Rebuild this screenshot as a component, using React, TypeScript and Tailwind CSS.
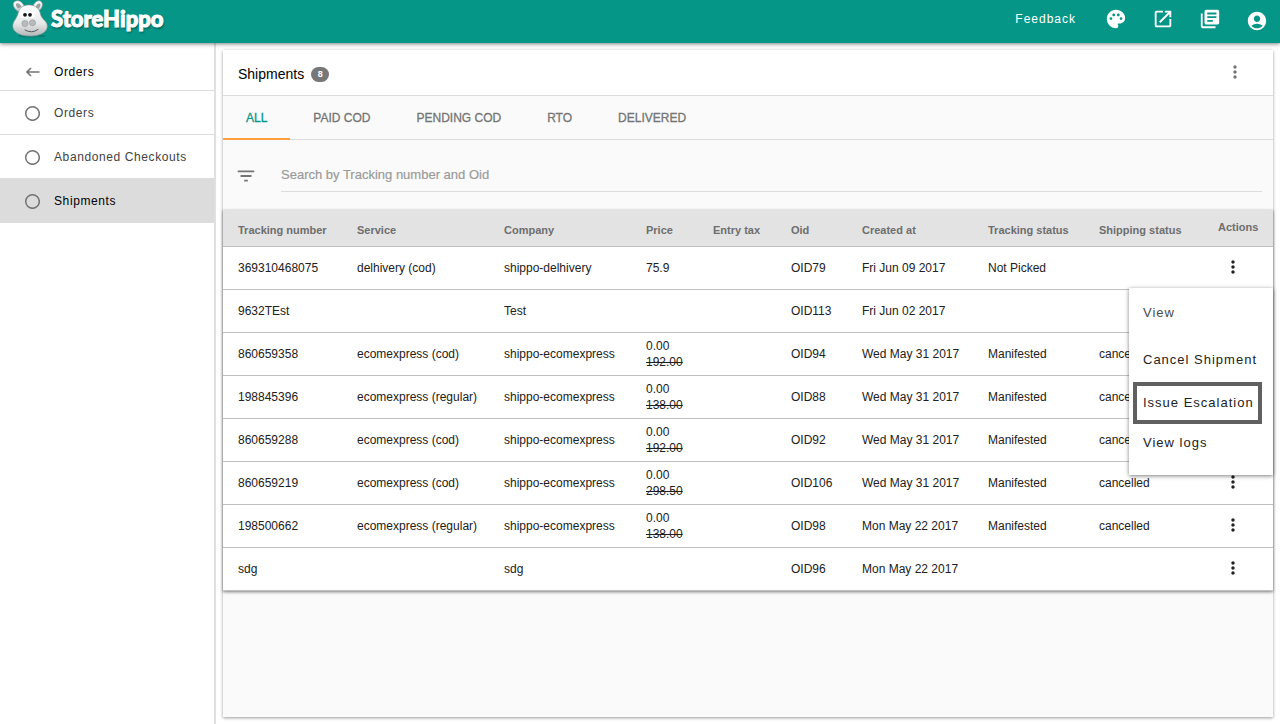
import React, { useState } from 'react';
import { MdPalette, MdOpenInNew, MdLibraryBooks, MdAccountCircle, MdMoreVert, MdFilterList } from 'react-icons/md';

const tabs = ['ALL', 'PAID COD', 'PENDING COD', 'RTO', 'DELIVERED'];

const navItems = ['Orders', 'Abandoned Checkouts', 'Shipments'];

const columns = [
    { label: 'Tracking number', width: 'w-[119px]' },
    { label: 'Service', width: 'w-[147px]' },
    { label: 'Company', width: 'w-[142px]' },
    { label: 'Price', width: 'w-[67px]' },
    { label: 'Entry tax', width: 'w-[78px]' },
    { label: 'Oid', width: 'w-[71px]' },
    { label: 'Created at', width: 'w-[126px]' },
    { label: 'Tracking status', width: 'w-[111px]' },
    { label: 'Shipping status', width: 'w-[119px]' },
];

interface Shipment {
    tracking: string;
    service?: string;
    company: string;
    price?: string;
    oldPrice?: string;
    oid: string;
    created: string;
    trackingStatus?: string;
    shippingStatus?: string;
}

const shipments: Shipment[] = [
    { tracking: '369310468075', service: 'delhivery (cod)', company: 'shippo-delhivery', price: '75.9', oid: 'OID79', created: 'Fri Jun 09 2017', trackingStatus: 'Not Picked' },
    { tracking: '9632TEst', company: 'Test', oid: 'OID113', created: 'Fri Jun 02 2017' },
    { tracking: '860659358', service: 'ecomexpress (cod)', company: 'shippo-ecomexpress', price: '0.00', oldPrice: '192.00', oid: 'OID94', created: 'Wed May 31 2017', trackingStatus: 'Manifested', shippingStatus: 'cancelled' },
    { tracking: '198845396', service: 'ecomexpress (regular)', company: 'shippo-ecomexpress', price: '0.00', oldPrice: '138.00', oid: 'OID88', created: 'Wed May 31 2017', trackingStatus: 'Manifested', shippingStatus: 'cancelled' },
    { tracking: '860659288', service: 'ecomexpress (cod)', company: 'shippo-ecomexpress', price: '0.00', oldPrice: '192.00', oid: 'OID92', created: 'Wed May 31 2017', trackingStatus: 'Manifested', shippingStatus: 'cancelled' },
    { tracking: '860659219', service: 'ecomexpress (cod)', company: 'shippo-ecomexpress', price: '0.00', oldPrice: '298.50', oid: 'OID106', created: 'Wed May 31 2017', trackingStatus: 'Manifested', shippingStatus: 'cancelled' },
    { tracking: '198500662', service: 'ecomexpress (regular)', company: 'shippo-ecomexpress', price: '0.00', oldPrice: '138.00', oid: 'OID98', created: 'Mon May 22 2017', trackingStatus: 'Manifested', shippingStatus: 'cancelled' },
    { tracking: 'sdg', company: 'sdg', oid: 'OID96', created: 'Mon May 22 2017' },
];

const HippoLogo = () => (
    <svg viewBox="0 0 37 38" className="w-[37px] h-[38px]" aria-hidden="true">
        <defs>
            <linearGradient id="skin" x1="0" y1="0" x2="0" y2="1">
                <stop offset="0" stopColor="#ffffff" />
                <stop offset="0.6" stopColor="#e6e7e7" />
                <stop offset="1" stopColor="#b4b8b8" />
            </linearGradient>
        </defs>
        <ellipse cx="20" cy="36" rx="14" ry="1.6" fill="#04665d" opacity="0.5" />
        <path d="M7 12 C0 8 0 2 4 1 C8 0 11 3 12.5 7 Z" fill="url(#skin)" stroke="#8d9999" strokeWidth="0.6" />
        <path d="M21 6.500 C22 2 27 -1 29.500 2 C32 5 29 10 26 11 Z" fill="url(#skin)" stroke="#8d9999" strokeWidth="0.6" />
        <path d="M6 8.500 C3.500 6 3.500 3.700 5 3.300 C7 3 8.800 5 9.500 7 Z" fill="#9a9f9f" />
        <path d="M23.800 7 C24.500 4.500 27 2.800 28.200 4 C29 5.500 27.500 8 25.800 9 Z" fill="#9a9f9f" />
        <path d="M6.500 12 C8 7 12 5 17 5 C22 5 26.500 7.500 28 12.500 C28.700 16 30 18 33 21 C38.500 27 34 35.800 19 36 C4 36.200 -2 29 2 21.500 C4.500 17.500 5.500 16 6.500 12 Z" fill="url(#skin)" stroke="#909b9b" strokeWidth="0.7" />
        <ellipse cx="12.200" cy="14.500" rx="4" ry="3.600" fill="#fff" />
        <ellipse cx="19.200" cy="14.500" rx="4" ry="3.600" fill="#fff" />
        <circle cx="13" cy="14.800" r="1.900" fill="#151515" />
        <circle cx="18" cy="14.800" r="1.900" fill="#151515" />
        <circle cx="13" cy="23.500" r="3.100" fill="#b8bbbb" stroke="#979c9c" strokeWidth="0.6" />
        <circle cx="20.500" cy="22.800" r="3.100" fill="#b8bbbb" stroke="#979c9c" strokeWidth="0.6" />
        <path d="M13 30 Q19.500 34 26 29.500" fill="none" stroke="#555b5b" strokeWidth="1" strokeLinecap="round" />
    </svg>
);

const ArrowLeft = () => (
    <svg viewBox="0 0 14 10" className="w-3.5 h-2.5 text-[#757575]" fill="none" stroke="currentColor" strokeWidth="1.6" aria-hidden="true">
        <path d="M13.500 5 H1.200 M5 1 L1 5 L5 9" />
    </svg>
);

const CircleIcon = () => (
    <svg viewBox="0 0 16 16" className="w-4 h-4 shrink-0 text-[#737373]" fill="none" stroke="currentColor" strokeWidth="1.500" aria-hidden="true">
        <circle cx="8.500" cy="8.500" r="6.800" />
    </svg>
);

const ActionMenu = () => (
    <div className="absolute top-full right-0 z-10 flex flex-col items-start w-36 pb-[13px] bg-white text-[13px] tracking-[1px] text-[#222] shadow-[0_1px_4px_rgba(0,0,0,0.5)]">
        <button className="h-[50px] px-3.5 text-[#4a4a4a]">View</button>
        <button className="h-11 px-3.5 whitespace-nowrap">Cancel Shipment</button>
        <button className="h-[42px] mx-1 pl-1.5 pr-1 border-4 border-[#606060] whitespace-nowrap">Issue Escalation</button>
        <button className="h-[38px] px-3.5">View logs</button>
    </div>
);

const App = () => {
    const [activeTab, setActiveTab] = useState('ALL');
    const [openRow, setOpenRow] = useState<number | null>(0);
    const [query, setQuery] = useState('');

    return (
        <div className="min-h-screen flex flex-col bg-white font-['Liberation_Sans',Arial,sans-serif] text-xs text-[#212121]">
            <header className="relative z-10 h-[43px] flex items-center justify-between px-3 bg-[#059688] text-white shadow-[0_1px_4px_rgba(0,0,0,0.5)]">
                <a href="#" className="flex items-center gap-0.5 pb-1.5" aria-label="StoreHippo">
                    <HippoLogo />
                    <span className="font-['Lato',sans-serif] font-black text-[22px] leading-6 [-webkit-text-stroke:1px_white] [text-shadow:1px_2px_2px_rgba(0,0,0,0.35)]">StoreHippo</span>
                </a>
                <nav className="flex items-center gap-[25px] pb-1.5">
                    <a href="#" className="mr-1 tracking-[1px]">Feedback</a>
                    <button aria-label="Themes"><MdPalette className="w-[22px] h-[22px]" /></button>
                    <button aria-label="Open store"><MdOpenInNew className="w-[22px] h-[22px]" /></button>
                    <button aria-label="Docs"><MdLibraryBooks className="w-[22px] h-[22px]" /></button>
                    <button aria-label="Account" className="pt-1"><MdAccountCircle className="w-[22px] h-[22px]" /></button>
                </nav>
            </header>

            <div className="flex-1 flex">
                <aside className="w-[216px] shrink-0 border-r-2 border-[#e0e0e0] tracking-wider">
                    <a href="#" className="h-12 pt-2.5 pl-[26px] flex items-center gap-3.5 border-b border-[#dcdcdc] text-black">
                        <ArrowLeft />
                        Orders
                    </a>
                    <nav>
                        {navItems.map((item) => (
                            <a
                                key={item}
                                href="#"
                                className={`h-11 pl-6 flex items-center gap-3.5 border-b border-[#dcdcdc] ${item === 'Shipments' ? 'bg-[#dcdcdc] text-black' : 'text-[#424242]'}`}
                            >
                                <CircleIcon />
                                {item}
                            </a>
                        ))}
                    </nav>
                </aside>

                <main className="flex-1 min-w-0 flex flex-col p-[7px]">
                    <section className="flex-1 bg-[#fafafa] shadow-[0_1px_3px_rgba(0,0,0,0.4)]">
                        <div className="h-[46px] pl-[15px] pr-7 flex items-center justify-between bg-white border-b border-[#dcdcdc]">
                            <h1 className="pt-0.5 flex items-center gap-[7px] text-sm text-black">
                                Shipments
                                <span className="w-[18px] h-[15px] mt-0.5 flex items-center justify-center rounded-full bg-[#777] text-white text-[9px] font-bold">8</span>
                            </h1>
                            <button aria-label="More options" className="pb-0.5 text-[#757575]"><MdMoreVert className="w-5 h-5" /></button>
                        </div>

                        <div role="tablist" className="h-11 flex border-b border-[#dcdcdc]">
                            {tabs.map((tab) => (
                                <button
                                    key={tab}
                                    role="tab"
                                    aria-selected={tab === activeTab}
                                    onClick={() => setActiveTab(tab)}
                                    className={`h-11 pt-0.5 px-[23px] border-b-2 [-webkit-text-stroke:0.3px] ${tab === activeTab ? 'text-[#059688] border-[#ff9f40]' : 'text-[#757575] border-transparent'}`}
                                >
                                    {tab}
                                </button>
                            ))}
                        </div>

                        <div className="h-[70px] flex items-center pl-3 pr-[11px] gap-6">
                            <button aria-label="Filter" className="pt-0.5 text-[#757575]"><MdFilterList className="w-[22px] h-[22px]" /></button>
                            <input
                                type="text"
                                aria-label="Search shipments"
                                value={query}
                                onChange={(e) => setQuery(e.target.value)}
                                placeholder="Search by Tracking number and Oid"
                                className="flex-1 h-[34px] border-b border-[#dcdcdc] text-[13px] outline-none placeholder:text-[#9a9a9a] [-webkit-text-stroke:0.2px]"
                            />
                        </div>

                        <table className="w-full table-fixed border-separate border-spacing-0 bg-white text-left shadow-[0_1px_3px_rgba(0,0,0,0.5)]">
                            <thead className="bg-[#e3e3e3] text-[11px] text-[#6e6e6e]">
                                <tr>
                                    {columns.map((col) => (
                                        <th key={col.label} className={`${col.width} h-[37px] pl-[15px] pt-1 border-b border-[#c0c0c0] font-bold whitespace-nowrap`}>{col.label}</th>
                                    ))}
                                    <th className="w-[70px] h-[37px] pl-[15px] pb-0.5 border-b border-[#c0c0c0] font-bold">Actions</th>
                                </tr>
                            </thead>
                            <tbody>
                                {shipments.map((row, i) => (
                                    <tr key={row.oid} className="[&>td]:h-[43px] [&>td]:border-b [&>td]:border-[#c0c0c0] [&>td]:pl-[15px] [&>td]:whitespace-nowrap">
                                        <td>{row.tracking}</td>
                                        <td>{row.service}</td>
                                        <td>{row.company}</td>
                                        <td>
                                            {row.price}
                                            {row.oldPrice && <s className="block">{row.oldPrice}</s>}
                                        </td>
                                        <td></td>
                                        <td>{row.oid}</td>
                                        <td>{row.created}</td>
                                        <td>{row.trackingStatus}</td>
                                        <td>{row.shippingStatus}</td>
                                        <td>
                                            <div className="relative h-10 flex items-center pl-[5px] pb-0.5">
                                                <button aria-label="Row actions" onClick={() => setOpenRow(openRow === i ? null : i)}>
                                                    <MdMoreVert className="w-5 h-5" />
                                                </button>
                                                {openRow === i && <ActionMenu />}
                                            </div>
                                        </td>
                                    </tr>
                                ))}
                            </tbody>
                        </table>
                    </section>
                </main>
            </div>
        </div>
    );
};

export default App;
